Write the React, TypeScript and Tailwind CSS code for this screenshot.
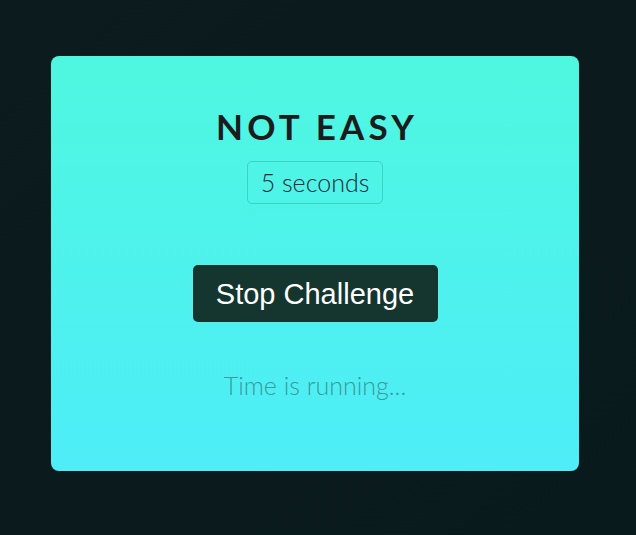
export default function App() {
  return (
    <div className="flex h-[535px] w-[636px] items-start bg-gradient-to-br from-[#0c1b1d] to-[#091a1d] pl-[51px] pt-[56px]">
      <div className="flex h-[415px] w-[528px] flex-col items-center rounded-[8px] bg-gradient-to-b from-[#4ff7df] to-[#4eedf8] pt-[48px]">
        <h1 className="pl-[0.12em] text-[35px] font-bold leading-[44px] tracking-[0.12em] text-[#1c1c1c] [font-family:Lato,sans-serif]">
          NOT EASY
        </h1>
        <div className="mt-[13px] rounded-[5px] border border-[#2fbcaa]/60 px-[13px] py-[5px] text-[25px] font-light leading-[31px] text-[#1e2a3a] [font-family:Lato,sans-serif]">
          5 seconds
        </div>
        <button className="mt-[61px] h-[57px] w-[245px] rounded-[5px] bg-[#14362f] text-[29px] leading-[32px] text-white [font-family:'Liberation_Sans',Arial,sans-serif]">
          Stop Challenge
        </button>
        <p className="mt-[48px] text-[25px] font-light leading-[30px] text-[#3b9a9d] [font-family:Lato,sans-serif]">
          Time is running...
        </p>
      </div>
    </div>
  );
}
